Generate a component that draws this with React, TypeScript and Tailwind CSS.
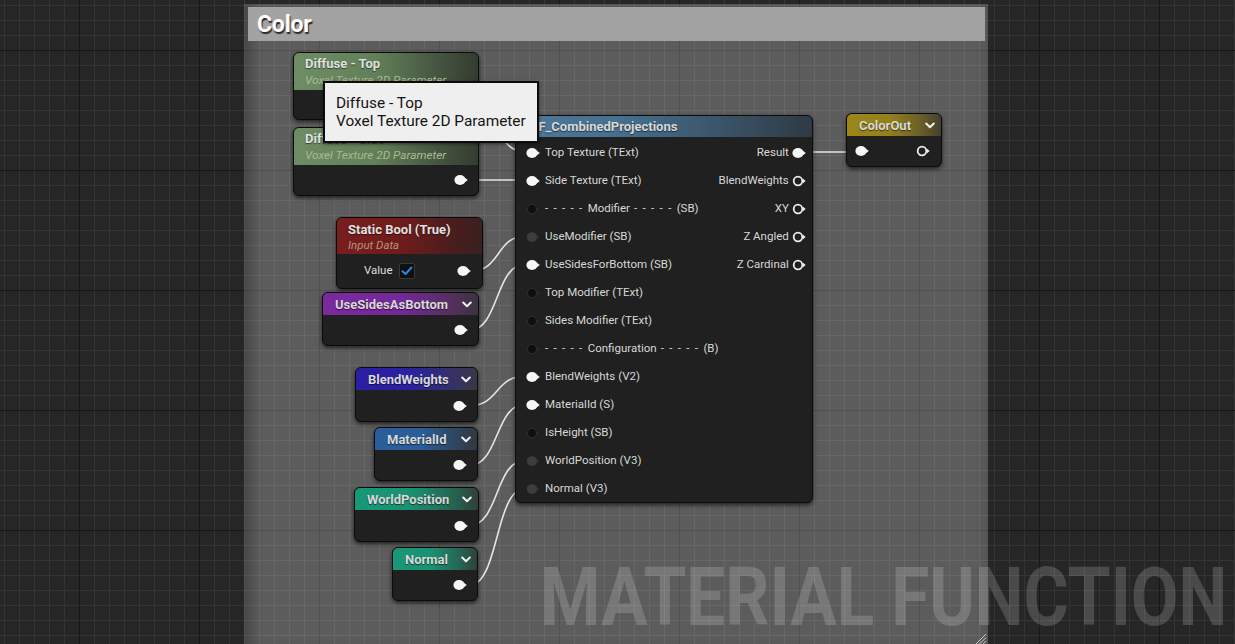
import React from "react";

type PinKind = "on" | "off" | "gray" | "ring";

function Pin({ kind }: { kind: PinKind }) {
  if (kind === "ring") {
    return (
      <svg width="14" height="12" viewBox="0 0 14 12" className="shrink-0">
        <circle cx="6" cy="6" r="4.3" fill="none" stroke="#ececec" strokeWidth="1.8" />
        <path d="M11 3.7 L13.7 6 L11 8.3 Z" fill="#ececec" />
      </svg>
    );
  }
  if (kind === "on") {
    return (
      <svg width="14" height="12" viewBox="0 0 14 12" className="shrink-0">
        <ellipse cx="6" cy="6" rx="5.6" ry="5" fill="#f6f6f6" />
        <path d="M10.5 3.4 L13.8 6 L10.5 8.6 Z" fill="#f6f6f6" />
      </svg>
    );
  }
  if (kind === "gray") {
    return (
      <svg width="14" height="12" viewBox="0 0 14 12" className="shrink-0">
        <ellipse cx="6" cy="6" rx="5.3" ry="4.8" fill="#3c3d3c" />
        <path d="M10.5 3.8 L13.2 6 L10.5 8.2 Z" fill="#333433" />
      </svg>
    );
  }
  return (
    <svg width="14" height="12" viewBox="0 0 14 12" className="shrink-0">
      <circle cx="6" cy="6" r="4.6" fill="#0e0f0e" stroke="#2a2b2a" strokeWidth="1.3" />
      <path d="M11 4 L13.2 6 L11 8 Z" fill="#2a2b2a" />
    </svg>
  );
}

function Chevron() {
  return (
    <svg width="10" height="7" viewBox="0 0 10 7" className="shrink-0">
      <path d="M1.2 1.5 L5 5.2 L8.8 1.5" fill="none" stroke="#f0f0f0" strokeWidth="2" strokeLinecap="round" strokeLinejoin="round" />
    </svg>
  );
}

function Check() {
  return (
    <div className="w-[16px] h-[16px] rounded-[2px] bg-[#0f0f10] border border-[#3a3a3a] flex items-center justify-center">
      <svg width="12" height="10" viewBox="0 0 12 10">
        <path d="M1.5 5.2 L4.5 8 L10.5 1.5" fill="none" stroke="#2a86e6" strokeWidth="2" strokeLinecap="round" strokeLinejoin="round" />
      </svg>
    </div>
  );
}

const nodeBase =
  "absolute flex flex-col rounded-[6px] overflow-hidden border border-[#0b0b0b] bg-[#1f201f] shadow-[0_2px_4px_rgba(0,0,0,0.65)]";

function ParamNode({
  pos,
  headerCls,
  title,
}: {
  pos: string;
  headerCls: string;
  title: string;
}) {
  return (
    <div className={nodeBase + " " + pos}>
      <div className={"h-[22px] shrink-0 flex items-center justify-between pl-[12px] pr-[6px] " + headerCls}>
        <span className="text-[13px] font-bold text-[#d8d8d8] leading-none [text-shadow:0_1px_1px_rgba(0,0,0,0.6)]">{title}</span>
        <Chevron />
      </div>
      <div className="flex-1 flex items-center justify-end pr-[10px]">
        <Pin kind="on" />
      </div>
    </div>
  );
}

function TexNode({ pos, title }: { pos: string; title: string }) {
  return (
    <div className={nodeBase + " " + pos}>
      <div className="h-[37px] shrink-0 flex flex-col pl-[11px] pt-[3px] bg-[linear-gradient(90deg,#6f8d65_0%,#617f58_45%,#445240_80%,#333c30_100%)]">
        <span className="text-[13px] font-bold text-[#e0e0e0] leading-[16px] [text-shadow:0_1px_1px_rgba(0,0,0,0.5)]">{title}</span>
        <span className="text-[11.8px] italic text-[#a9ba91] leading-[16px]">Voxel Texture 2D Parameter</span>
      </div>
      <div className="flex-1 flex items-center justify-end pr-[10px]">
        <Pin kind="on" />
      </div>
    </div>
  );
}

function Label({ text }: { text: string }) {
  const m = text.match(/^(- - - - - )(.*?)( - - - - - )(.*)$/);
  if (m) {
    return (
      <span className="text-[11.5px] text-[#d8d8d8] whitespace-pre">
        <span className="tracking-[1.25px]">{m[1]}</span>
        {m[2]}
        <span className="tracking-[1.25px]">{m[3]}</span>
        {m[4]}
      </span>
    );
  }
  return <span className="text-[11.5px] text-[#d8d8d8] whitespace-pre">{text}</span>;
}

const mfInputs: { label: string; kind: PinKind }[] = [
  { label: "Top Texture (TExt)", kind: "on" },
  { label: "Side Texture (TExt)", kind: "on" },
  { label: "- - - - - Modifier - - - - - (SB)", kind: "off" },
  { label: "UseModifier (SB)", kind: "gray" },
  { label: "UseSidesForBottom (SB)", kind: "on" },
  { label: "Top Modifier (TExt)", kind: "off" },
  { label: "Sides Modifier (TExt)", kind: "off" },
  { label: "- - - - - Configuration - - - - - (B)", kind: "off" },
  { label: "BlendWeights (V2)", kind: "on" },
  { label: "MaterialId (S)", kind: "on" },
  { label: "IsHeight (SB)", kind: "off" },
  { label: "WorldPosition (V3)", kind: "gray" },
  { label: "Normal (V3)", kind: "gray" },
];

const mfOutputs: { label: string; kind: PinKind }[] = [
  { label: "Result", kind: "on" },
  { label: "BlendWeights", kind: "ring" },
  { label: "XY", kind: "ring" },
  { label: "Z Angled", kind: "ring" },
  { label: "Z Cardinal", kind: "ring" },
];

function wire(x1: number, y1: number, x2: number, y2: number) {
  const d = Math.max(20, (x2 - x1) * 0.55);
  return `M${x1} ${y1} C${x1 + d} ${y1}, ${x2 - d} ${y2}, ${x2} ${y2}`;
}

const wires: [number, number, number, number][] = [
  [467, 104, 526, 152],
  [467, 180, 526, 180],
  [471, 271, 526, 236],
  [468, 331, 526, 264],
  [468, 406, 526, 376],
  [468, 466, 526, 404],
  [468, 526, 526, 460],
  [468, 586, 526, 488],
  [803, 152, 855, 152],
];

export default function App() {
  return (
    <div className="relative w-[1235px] h-[644px] overflow-hidden font-[Roboto,'Liberation_Sans',sans-serif] bg-[#262626] bg-[linear-gradient(to_right,#171717_1px,transparent_1px),linear-gradient(to_bottom,#171717_1px,transparent_1px),linear-gradient(to_right,#343434_1px,transparent_1px),linear-gradient(to_bottom,#343434_1px,transparent_1px)] bg-size-[120px_120px,120px_120px,15px_15px,15px_15px] bg-position-[79px_50px,79px_50px,4px_5px,4px_5px]">
      {/* Comment box */}
      <div className="absolute left-[244px] top-[4px] w-[744px] h-[660px] bg-white/25 shadow-[inset_8px_0_12px_rgba(0,0,0,0.18),inset_0_-14px_14px_rgba(0,0,0,0.12)] pt-[3px] pl-[4px] pr-[3px]">
        <div className="h-[34px] bg-[#a3a3a3] flex items-center pl-[9px]">
          <span className="text-[23px] font-bold text-white leading-none tracking-[-0.2px] [text-shadow:1px_2px_1px_rgba(0,0,0,0.75)]">Color</span>
        </div>
      </div>
      {/* resize grip */}
      <svg className="absolute left-[973px] top-[631px]" width="14" height="14" viewBox="0 0 14 14">
        <path d="M13 3 L3 13 M13 6.5 L6.5 13 M13 10 L10 13" stroke="#c8c8c8" strokeWidth="1" />
      </svg>

      {/* watermark */}
      <div className="absolute left-[540px] top-[556px] text-[82px] leading-none font-bold text-white/[0.17] whitespace-nowrap origin-left scale-x-[0.843]">
        MATERIAL FUNCTION
      </div>

      {/* wires */}
      <svg className="absolute inset-0 pointer-events-none" width="1235" height="644">
        {wires.map((w, i) => (
          <path key={i} d={wire(w[0], w[1], w[2], w[3])} fill="none" stroke="#e4e4e4" strokeWidth="1.6" />
        ))}
      </svg>

      {/* Texture nodes */}
      <TexNode pos="left-[293px] top-[52px] w-[186px] h-[68px]" title="Diffuse - Top" />
      <TexNode pos="left-[293px] top-[127px] w-[186px] h-[69px]" title="Diffuse - Side" />

      {/* Static bool */}
      <div className={nodeBase + " left-[336px] top-[217px] w-[147px] h-[72px]"}>
        <div className="h-[36px] shrink-0 flex flex-col pl-[11px] pt-[3px] bg-[linear-gradient(90deg,#7a1d1d_0%,#6e1c1c_45%,#4a1d1d_80%,#3a2020_100%)]">
          <span className="text-[13px] font-bold text-[#e0e0e0] leading-[17px] [text-shadow:0_1px_1px_rgba(0,0,0,0.5)]">Static Bool (True)</span>
          <span className="text-[11.5px] italic text-[#b9937c] leading-[15px]">Input Data</span>
        </div>
        <div className="flex-1 flex items-center pl-[27px] pr-[11px]">
          <span className="text-[11.5px] text-[#dedede] mr-[6px]">Value</span>
          <Check />
          <div className="flex-1" />
          <Pin kind="on" />
        </div>
      </div>

      <ParamNode pos="left-[322px] top-[292px] w-[157px] h-[54px]" title="UseSidesAsBottom" headerCls="bg-[linear-gradient(90deg,#7b2a9c_0%,#74289a_50%,#55305f_82%,#3d3242_100%)]" />
      <ParamNode pos="left-[355px] top-[367px] w-[123px] h-[55px]" title="BlendWeights" headerCls="bg-[linear-gradient(90deg,#2a1ea2_0%,#2b21a0_45%,#34306a_78%,#383845_100%)]" />
      <ParamNode pos="left-[374px] top-[427px] w-[104px] h-[54px]" title="MaterialId" headerCls="bg-[linear-gradient(90deg,#2a5f9c_0%,#2b5d98_45%,#2e4560_80%,#33383d_100%)]" />
      <ParamNode pos="left-[354px] top-[487px] w-[125px] h-[55px]" title="WorldPosition" headerCls="bg-[linear-gradient(90deg,#189878_0%,#1a9173_45%,#266452_80%,#2f403b_100%)]" />
      <ParamNode pos="left-[392px] top-[547px] w-[86px] h-[54px]" title="Normal" headerCls="bg-[linear-gradient(90deg,#189878_0%,#1a9173_45%,#266452_80%,#2f403b_100%)]" />

      {/* ColorOut */}
      <div className={nodeBase + " left-[846px] top-[113px] w-[96px] h-[54px]"}>
        <div className="h-[22px] shrink-0 flex items-center justify-between pl-[12px] pr-[6px] bg-[linear-gradient(90deg,#9d8618_0%,#94801c_45%,#6a5e28_78%,#44402e_100%)]">
          <span className="text-[13px] font-bold text-[#d8d8d8] leading-none [text-shadow:0_1px_1px_rgba(0,0,0,0.6)]">ColorOut</span>
          <Chevron />
        </div>
        <div className="flex-1 flex items-center justify-between pl-[8px] pr-[11px]">
          <Pin kind="on" />
          <Pin kind="ring" />
        </div>
      </div>

      {/* MF_CombinedProjections */}
      <div className={nodeBase + " left-[515px] top-[115px] w-[298px] h-[388px]"}>
        <div className="h-[21px] shrink-0 flex items-center pl-[11px] bg-[linear-gradient(90deg,#4f7899_0%,#46708f_35%,#3a5368_70%,#2f3a44_100%)]">
          <span className="text-[13px] font-bold text-[#d8d8d8] leading-none [text-shadow:0_1px_1px_rgba(0,0,0,0.6)]">MF_CombinedProjections</span>
        </div>
        <div className="flex pt-[2px]">
          <div className="flex flex-col pl-[10px]">
            {mfInputs.map((p, i) => (
              <div key={i} className="h-[28px] flex items-center gap-[5px]">
                <Pin kind={p.kind} />
                <Label text={p.label} />
              </div>
            ))}
          </div>
          <div className="flex-1" />
          <div className="flex flex-col pr-[11px] items-end">
            {mfOutputs.map((p, i) => (
              <div key={i} className="h-[28px] flex items-center gap-[3px]">
                <span className="text-[11.5px] text-[#d8d8d8]">{p.label}</span>
                <Pin kind={p.kind} />
              </div>
            ))}
          </div>
        </div>
      </div>

      {/* Tooltip */}
      <div className="absolute left-[323px] top-[81px] w-[216px] h-[62px] bg-[#efefef] border-2 border-[#0c0c0c] pl-[11px] pt-[11px] shadow-[0_1px_3px_rgba(0,0,0,0.5)]">
        <div className="text-[15.4px] leading-[18px] text-[#141414]">Diffuse - Top</div>
        <div className="text-[15.4px] leading-[18px] text-[#141414]">Voxel Texture 2D Parameter</div>
      </div>
    </div>
  );
}
